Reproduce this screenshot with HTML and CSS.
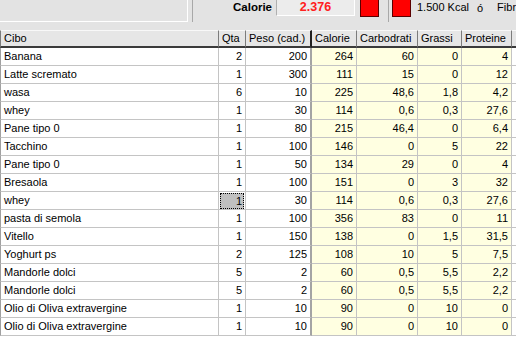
FILE: index.html
```html
<!DOCTYPE html>
<html>
<head>
<meta charset="utf-8">
<link rel="stylesheet" href="styles.css">
</head>
<body>
<div class="app">
  <div class="topbar">
    <div class="panel-left"></div>
    <div class="group group-cal">
      <span class="cal-label">Calorie</span>
      <div class="value-box">2.376</div>
      <div class="red-sq"></div>
    </div>
    <div class="group group-kcal">
      <div class="red-sq"></div>
      <span class="kcal">1.500 Kcal</span>
      <span class="radio">ó</span>
      <span class="fibr">Fibr</span>
    </div>
  </div>
  <div class="grid-wrap">
    <div class="grid" id="grid">
      <div class="hd first">Cibo</div><div class="hd">Qta</div><div class="hd thick">Peso (cad.)</div><div class="hd">Calorie</div><div class="hd">Carbodrati</div><div class="hd">Grassi</div><div class="hd">Proteine</div><div class="hd"></div>

      <div class="c name">Banana</div><div class="c n">2</div><div class="c n thick">200</div><div class="c n y">264</div><div class="c n y">60</div><div class="c n y">0</div><div class="c n y">4</div><div class="c"></div>
      <div class="c name">Latte scremato</div><div class="c n">1</div><div class="c n thick">300</div><div class="c n y">111</div><div class="c n y">15</div><div class="c n y">0</div><div class="c n y">12</div><div class="c"></div>
      <div class="c name">wasa</div><div class="c n">6</div><div class="c n thick">10</div><div class="c n y">225</div><div class="c n y">48,6</div><div class="c n y">1,8</div><div class="c n y">4,2</div><div class="c"></div>
      <div class="c name">whey</div><div class="c n">1</div><div class="c n thick">30</div><div class="c n y">114</div><div class="c n y">0,6</div><div class="c n y">0,3</div><div class="c n y">27,6</div><div class="c"></div>
      <div class="c name">Pane tipo 0</div><div class="c n">1</div><div class="c n thick">80</div><div class="c n y">215</div><div class="c n y">46,4</div><div class="c n y">0</div><div class="c n y">6,4</div><div class="c"></div>
      <div class="c name">Tacchino</div><div class="c n">1</div><div class="c n thick">100</div><div class="c n y">146</div><div class="c n y">0</div><div class="c n y">5</div><div class="c n y">22</div><div class="c"></div>
      <div class="c name">Pane tipo 0</div><div class="c n">1</div><div class="c n thick">50</div><div class="c n y">134</div><div class="c n y">29</div><div class="c n y">0</div><div class="c n y">4</div><div class="c"></div>
      <div class="c name">Bresaola</div><div class="c n">1</div><div class="c n thick">100</div><div class="c n y">151</div><div class="c n y">0</div><div class="c n y">3</div><div class="c n y">32</div><div class="c"></div>
      <div class="c name">whey</div><div class="c n sel"><span class="focus">1</span></div><div class="c n thick">30</div><div class="c n y">114</div><div class="c n y">0,6</div><div class="c n y">0,3</div><div class="c n y">27,6</div><div class="c"></div>
      <div class="c name">pasta di semola</div><div class="c n">1</div><div class="c n thick">100</div><div class="c n y">356</div><div class="c n y">83</div><div class="c n y">0</div><div class="c n y">11</div><div class="c"></div>
      <div class="c name">Vitello</div><div class="c n">1</div><div class="c n thick">150</div><div class="c n y">138</div><div class="c n y">0</div><div class="c n y">1,5</div><div class="c n y">31,5</div><div class="c"></div>
      <div class="c name">Yoghurt ps</div><div class="c n">2</div><div class="c n thick">125</div><div class="c n y">108</div><div class="c n y">10</div><div class="c n y">5</div><div class="c n y">7,5</div><div class="c"></div>
      <div class="c name">Mandorle dolci</div><div class="c n">5</div><div class="c n thick">2</div><div class="c n y">60</div><div class="c n y">0,5</div><div class="c n y">5,5</div><div class="c n y">2,2</div><div class="c"></div>
      <div class="c name">Mandorle dolci</div><div class="c n">5</div><div class="c n thick">2</div><div class="c n y">60</div><div class="c n y">0,5</div><div class="c n y">5,5</div><div class="c n y">2,2</div><div class="c"></div>
      <div class="c name">Olio di Oliva extravergine</div><div class="c n">1</div><div class="c n thick">10</div><div class="c n y">90</div><div class="c n y">0</div><div class="c n y">10</div><div class="c n y">0</div><div class="c"></div>
      <div class="c name">Olio di Oliva extravergine</div><div class="c n">1</div><div class="c n thick">10</div><div class="c n y">90</div><div class="c n y">0</div><div class="c n y">10</div><div class="c n y">0</div><div class="c"></div>
    </div>
  </div>
</div>
</body>
</html>
```
FILE: styles.css
```css
html, body {
  margin: 0;
  padding: 0;
  width: 516px;
  height: 347px;
  overflow: hidden;
  background: #ffffff;
  font-family: "Liberation Sans", Arial, sans-serif;
  font-size: 11px;
  color: #000;
}

.app {
  width: 516px;
  height: 347px;
  overflow: hidden;
  display: flex;
  flex-direction: column;
}

.topbar {
  height: 30px;
  flex: 0 0 30px;
  background: #e3e3e3;
  display: flex;
  align-items: flex-start;
  white-space: nowrap;
}

.panel-left {
  width: 187px;
  height: 21px;
  border-right: 1px solid #ffffff;
  border-bottom: 1px solid #ffffff;
  flex: 0 0 auto;
}

.group {
  height: 22px;
  border-left: 1px solid #a8a8a8;
  display: flex;
  align-items: flex-start;
  flex: 0 0 auto;
}

.group-cal {
  margin-left: 4px;
  width: 195px;
}

.cal-label {
  margin-left: 40px;
  font-weight: bold;
  font-size: 11.5px;
  line-height: 15px;
}

.value-box {
  margin-left: 4px;
  width: 77px;
  height: 15px;
  background: #ececec;
  border-right: 1px solid #ffffff;
  border-bottom: 1px solid #ffffff;
  border-left: 1px solid #b0b0b0;
  color: #ff2020;
  font-weight: bold;
  font-size: 12.5px;
  line-height: 15px;
  text-align: center;
}

.red-sq {
  width: 17px;
  height: 16px;
  background: #ff0000;
  border: 1px solid #5a0000;
  border-top: none;
}

.group-cal .red-sq {
  margin-left: 5px;
}

.group-kcal {
  flex: 1 1 auto;
}

.group-kcal .red-sq {
  margin-left: 3px;
}

.kcal {
  margin-left: 6px;
  line-height: 14px;
}

.radio {
  margin-left: 8px;
  font-size: 11px;
  line-height: 14px;
  margin-top: 1px;
}

.fibr {
  margin-left: 14px;
  line-height: 14px;
}

.grid-wrap {
  flex: 1 1 auto;
  overflow: hidden;
  background: #ffffff;
}

.grid {
  display: grid;
  grid-template-columns: 219px 27px 66px 45px 61px 44px 50px 30px;
  grid-auto-rows: 18px;
  width: 542px;
}

.hd {
  box-sizing: border-box;
  background: #e6e6e6;
  border-top: 1px solid #f8f8f8;
  border-right: 1px solid #7c7c7c;
  border-bottom: 2px solid #3a3a3a;
  padding-left: 3px;
  line-height: 15px;
  overflow: hidden;
  white-space: nowrap;
}

.hd.first {
  border-left: 1px solid #7c7c7c;
}

.hd.thick {
  border-right: 2px solid #202020;
}

.c {
  box-sizing: border-box;
  border-right: 1px solid #c4c4c4;
  border-bottom: 1px solid #c4c4c4;
  line-height: 17px;
  white-space: nowrap;
  overflow: hidden;
  background: #ffffff;
}

.c.name {
  border-left: 1px solid #a0a0a0;
  padding-left: 3px;
}

.c.n {
  text-align: right;
  padding-right: 3px;
}

.c.thick {
  border-right: 2px solid #a4a4a4;
}

.c.y {
  background: #ffffe1;
}

.c.sel {
  padding: 1px 1px 0 1px;
}

.focus {
  display: block;
  box-sizing: border-box;
  height: 16px;
  line-height: 14px;
  background: #c0c0c0;
  border: 1px dotted #000;
  padding-right: 1px;
}
```
